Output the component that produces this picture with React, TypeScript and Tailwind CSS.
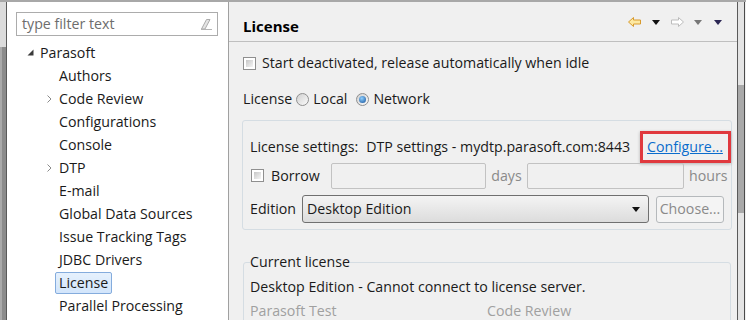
import React from 'react';

const treeItems: { label: string; expandable?: boolean; selected?: boolean }[] = [
  { label: 'Authors' },
  { label: 'Code Review', expandable: true },
  { label: 'Configurations' },
  { label: 'Console' },
  { label: 'DTP', expandable: true },
  { label: 'E-mail' },
  { label: 'Global Data Sources' },
  { label: 'Issue Tracking Tags' },
  { label: 'JDBC Drivers' },
  { label: 'License', selected: true },
  { label: 'Parallel Processing' },
];

function Checkbox() {
  return (
    <div className="w-[13px] h-[13px] shrink-0 border border-[#8f8f8f] bg-white p-[2px]">
      <div className="w-full h-full bg-linear-to-br from-[#c6c6c6] to-[#f6f6f6]" />
    </div>
  );
}

function Radio({ checked }: { checked?: boolean }) {
  return (
    <div className="w-[13px] h-[13px] shrink-0 rounded-full border border-[#8f8f8f] bg-linear-to-br from-[#d0d0d0] to-[#fbfbfb] flex items-center justify-center">
      {checked && (
        <div className="w-[7px] h-[7px] rounded-full bg-[radial-gradient(circle_at_40%_35%,#8fd0ff,#134f98)]" />
      )}
    </div>
  );
}

function DownTriangle({ color }: { color: string }) {
  return (
    <svg width="8" height="5" viewBox="0 0 8 5">
      <polygon points="0,0 8,0 4,5" fill={color} />
    </svg>
  );
}

function App() {
  return (
    <div className="w-[746px] h-[320px] overflow-hidden flex bg-[#f0f0f0] font-['Open_Sans',sans-serif] text-[14.2px] text-[#1a1a1a] border-t-2 border-[#a8a8a8]">
      {/* left scrollbar strip */}
      <div className="w-[7px] h-full shrink-0 flex flex-col bg-[#dcdcdc] border-r border-[#5a5a5a]">
        <div className="h-[45px] shrink-0" />
        <div className="flex-1 bg-[#8c8c8c] border-l-2 border-[#aaaaaa]" />
      </div>

      {/* left tree panel */}
      <div className="w-[222px] h-full shrink-0 bg-white border-r border-[#a0a0a0] flex flex-col">
        <div className="shrink-0 ml-[9px] mt-[10px] w-[202px] h-[24px] border border-[#acacac] flex items-center pl-[5px] pr-[4px]">
          <span className="flex-1 text-[#6d6d6d] leading-none">type filter text</span>
          <svg width="14" height="14" viewBox="0 0 14 14">
            <polygon points="2.5,12 7.5,2.5 11,2.5 6,12" fill="#e4e4e4" stroke="#ababab" strokeWidth="1" />
            <line x1="2" y1="12.5" x2="13" y2="12.5" stroke="#b5b5b5" strokeWidth="1" />
          </svg>
        </div>
        <div className="mt-[5px] flex flex-col">
          <div className="h-[23px] shrink-0 flex items-center pl-[20px]">
            <svg width="7" height="7" viewBox="0 0 7 7" className="mr-[6px]">
              <polygon points="6.5,0.5 6.5,6.5 0.5,6.5" fill="#3a3a3a" />
            </svg>
            <span>Parasoft</span>
          </div>
          {treeItems.map((item) => (
            <div key={item.label} className="h-[23px] shrink-0 flex items-center pl-[40px]">
              <div className="w-[12px] flex items-center">
                {item.expandable && (
                  <svg width="5" height="8" viewBox="0 0 5 8">
                    <polyline points="0.5,0.5 4,4 0.5,7.5" fill="none" stroke="#8a8a8a" strokeWidth="1" />
                  </svg>
                )}
              </div>
              {item.selected ? (
                <span className="h-[22px] flex items-center px-[3px] -ml-[4px] border border-[#84acdd] rounded-[2px] bg-linear-to-b from-[#e6f1fd] to-[#d2e5fb]">
                  {item.label}
                </span>
              ) : (
                <span>{item.label}</span>
              )}
            </div>
          ))}
        </div>
      </div>

      {/* right preference page */}
      <div className="w-[509px] h-full shrink-0 flex flex-col border-r border-[#5a5a5a]">
        <div className="h-[40px] shrink-0 flex items-start pl-[14px] pr-[15px] border-b border-[#bfbfbf]">
          <span className="flex-1 mt-[13px] leading-[22px] font-bold text-[15px] text-black">License</span>
          <div className="mt-[15px] flex items-center">
            <svg width="13" height="10" viewBox="0 0 13 10">
              <polygon points="0.5,5 5.5,0.5 5.5,3 12.5,3 12.5,7 5.5,7 5.5,9.5" fill="#fde9a2" stroke="#d89b2e" strokeWidth="1" />
            </svg>
            <div className="ml-[11px]"><DownTriangle color="#111" /></div>
            <svg width="13" height="10" viewBox="0 0 13 10" className="ml-[11px]">
              <polygon points="12.5,5 7.5,0.5 7.5,3 0.5,3 0.5,7 7.5,7 7.5,9.5" fill="#ffffff" stroke="#bdbdbd" strokeWidth="1" />
            </svg>
            <div className="ml-[10px]"><DownTriangle color="#777" /></div>
            <div className="ml-[12px]"><DownTriangle color="#2c2754" /></div>
          </div>
        </div>

        <div className="pl-[14px] flex flex-col">
          <div className="shrink-0 mt-[10px] h-[22px] flex items-center gap-[6px]">
            <Checkbox />
            <span>Start deactivated, release automatically when idle</span>
          </div>
          <div className="shrink-0 mt-[14px] h-[22px] flex items-center">
            <span>License</span>
            <div className="ml-[4px]"><Radio /></div>
            <span className="ml-[4px]">Local</span>
            <div className="ml-[9px]"><Radio checked /></div>
            <span className="ml-[4px]">Network</span>
          </div>

          {/* license settings group */}
          <div className="shrink-0 mt-[10px] -ml-px w-[490px] border border-[#d5dde3] rounded-[3px] pl-[7px] pt-[15px] pb-[6px] flex flex-col">
            <div className="h-[22px] flex items-center">
              <span>License settings:</span>
              <span className="ml-[8px]">DTP settings - mydtp.parasoft.com:8443</span>
              <div className="ml-auto -my-[5px] h-[32px] w-[91px] border-[3px] border-[#e0393e] shadow-[0_1px_3px_rgba(0,0,0,0.25)] flex items-center pl-[4px]">
                <span className="text-[#0a6ccc] underline">Configure...</span>
              </div>
            </div>
            <div className="mt-[5px] h-[26px] flex items-center">
              <div className="w-[81px] flex items-center pl-px">
                <Checkbox />
                <span className="ml-[7px]">Borrow</span>
              </div>
              <div className="w-[155px] h-[26px] border border-[#c2c2c2] rounded-[2px]" />
              <span className="w-[41px] text-center text-[#8a8a8a]">days</span>
              <div className="w-[157px] h-[26px] border border-[#c2c2c2] rounded-[2px]" />
              <span className="ml-[5px] text-[#8a8a8a]">hours</span>
            </div>
            <div className="mt-[6px] h-[28px] flex items-center">
              <span className="w-[52px]">Edition</span>
              <div className="w-[347px] h-[28px] border border-[#707070] rounded-[3px] bg-linear-to-b from-[#f4f4f4] to-[#dcdcdc] flex items-center pl-[4px] pr-[8px]">
                <span className="flex-1">Desktop Edition</span>
                <DownTriangle color="#111" />
              </div>
              <div className="ml-[7px] w-[68px] h-[27px] border border-[#b5b9bc] rounded-[3px] bg-[#f4f4f4] flex items-center justify-center text-[#8a8a8a]">
                Choose...
              </div>
            </div>
          </div>

          {/* current license group */}
          <fieldset className="shrink-0 mt-[22px] w-[488px] border border-[#d5dde3] rounded-[3px] px-[6px] pb-[10px]">
            <legend className="leading-[20px] px-0">Current license</legend>
            <div className="mt-[5px] leading-[20px]">Desktop Edition - Cannot connect to license server.</div>
            <div className="mt-[4px] leading-[20px] flex text-[#a0a0a0]">
              <span className="w-[237px]">Parasoft Test</span>
              <span>Code Review</span>
            </div>
          </fieldset>
        </div>
      </div>

      {/* right scrollbar strip */}
      <div className="w-[7px] h-full shrink-0 flex flex-col bg-[#e4e4e4] border-r border-[#4a4a4a]">
        <div className="h-[83px] shrink-0" />
        <div className="h-[128px] shrink-0 bg-[#a9a9a9]" />
      </div>
    </div>
  );
}

export default App;
